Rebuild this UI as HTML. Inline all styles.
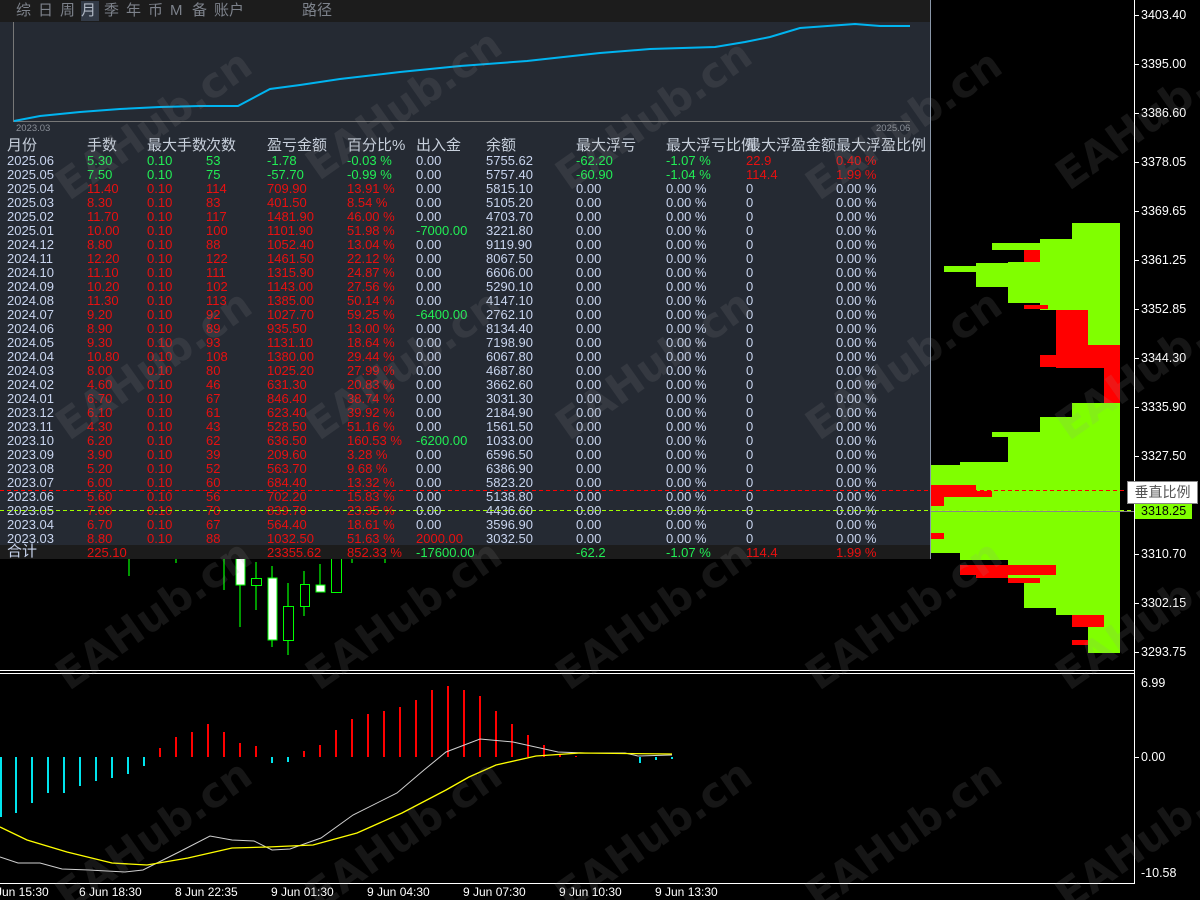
<!DOCTYPE html>
<html style="width:1200px;height:900px;overflow:hidden"><head><meta charset="utf-8">
<style>
*{margin:0;padding:0;box-sizing:border-box}
body{width:1200px;height:900px;background:#000;position:relative;overflow:hidden;font-family:"Liberation Sans","Noto Sans CJK SC",sans-serif}
.abs{position:absolute}
#panel{position:absolute;left:0;top:0;width:931px;height:559px;background:#252a33;border-right:1px solid #8a97a8}
#tb{position:absolute;left:0;top:0;width:930px;height:22px;background:#1c1c1c;color:#7d828b;font-size:15px;line-height:22px}
#tb span{position:absolute;top:0}
.r{position:absolute;left:0;width:930px;height:14px;line-height:14px;font-size:13px;color:#c8d4ee;white-space:nowrap}
.r span{position:absolute;top:0}
.h{font-size:15px;height:18px;line-height:18px;color:#c8d0dc}
.c1{left:7px}.c2{left:87px}.c3{left:147px}.c4{left:206px}.c5{left:267px}.c6{left:347px}.c7{left:416px}.c8{left:486px}.c9{left:576px}.c10{left:666px}.c11{left:746px}.c12{left:836px}
.g{color:#22ee55}.d{color:#e81010}
.rd .c2,.rd .c3,.rd .c4,.rd .c5,.rd .c6{color:#e81010}
.gr .c2,.gr .c3,.gr .c4,.gr .c5,.gr .c6,.gr .c9,.gr .c10{color:#22ee55}
.gr .c11,.gr .c12{color:#e81010}
.pl{position:absolute;left:1141px;color:#fff;font-size:12.5px;line-height:14px}
.tk{position:absolute;left:1134px;width:5px;height:1px;background:#fff}
#wmw{position:absolute;left:0;top:0;width:1200px;height:900px;overflow:hidden}
.wm{position:absolute;font-size:42px;font-weight:bold;color:rgba(150,150,150,0.15);transform:rotate(-35deg);white-space:nowrap;font-family:"DejaVu Sans",sans-serif}
.tl{position:absolute;top:885px;color:#fff;font-size:12px}
</style></head><body>

<svg class="abs" style="left:0;top:0" width="1200" height="900">
<g stroke="#00ff00" stroke-width="1.2" fill="none">
<line x1="129" y1="558" x2="129" y2="576"/><line x1="176" y1="558" x2="176" y2="563"/><line x1="224" y1="558" x2="224" y2="590"/>
<line x1="240" y1="558" x2="240" y2="627"/><line x1="256" y1="562" x2="256" y2="610"/><line x1="272" y1="566" x2="272" y2="647"/>
<line x1="288" y1="583" x2="288" y2="655"/><line x1="304" y1="571" x2="304" y2="616"/><line x1="320" y1="564" x2="320" y2="592"/>
<line x1="352" y1="558" x2="352" y2="563"/><line x1="385" y1="558" x2="385" y2="563"/>
</g>
<g stroke="#00ff00" stroke-width="1">
<rect x="236" y="558" width="9" height="27" fill="#fff"/>
<rect x="251.5" y="578.5" width="10" height="7" fill="#000"/>
<rect x="268" y="578" width="9" height="62" fill="#fff"/>
<rect x="283.5" y="606.5" width="10" height="34" fill="#000"/>
<rect x="300.5" y="584.5" width="9" height="22" fill="#000"/>
<rect x="316" y="585" width="9" height="7" fill="#fff"/>
<rect x="331.5" y="556" width="10" height="36.5" fill="#000"/>
</g>
<g fill="#80ff00">
<rect x="1072" y="223" width="48" height="16"/>
<rect x="1040" y="239" width="80" height="71"/>
<rect x="992" y="243" width="48" height="7"/>
<rect x="1008" y="262" width="32" height="41"/>
<rect x="976" y="263" width="32" height="24"/>
<rect x="944" y="266" width="32" height="6"/>
<rect x="1088" y="310" width="32" height="35"/>
<rect x="1072" y="403" width="48" height="14"/>
<rect x="1040" y="417" width="80" height="15"/>
<rect x="992" y="432" width="128" height="5"/>
<rect x="1008" y="437" width="112" height="25"/>
<rect x="960" y="462" width="160" height="4"/>
<rect x="930" y="465" width="190" height="88"/>
<rect x="960" y="553" width="160" height="7"/>
<rect x="1008" y="560" width="112" height="23"/>
<rect x="1024" y="583" width="96" height="25"/>
<rect x="1056" y="608" width="64" height="7"/>
<rect x="1088" y="615" width="32" height="38"/>
</g>
<g fill="#ff0000">
<rect x="1024" y="250" width="16" height="12"/>
<rect x="1024" y="305" width="24" height="4"/>
<rect x="1056" y="310" width="32" height="58"/>
<rect x="1088" y="345" width="32" height="23"/>
<rect x="1104" y="368" width="16" height="35"/>
<rect x="1040" y="355" width="16" height="12"/>
<rect x="930" y="485" width="46" height="12"/>
<rect x="976" y="491" width="16" height="6"/>
<rect x="930" y="497" width="14" height="9"/>
<rect x="930" y="533" width="14" height="6"/>
<rect x="960" y="565" width="96" height="10"/>
<rect x="976" y="575" width="32" height="3"/>
<rect x="1008" y="578" width="32" height="5"/>
<rect x="1072" y="615" width="32" height="12"/>
<rect x="1072" y="640" width="16" height="5"/>
</g>
<line x1="930" y1="511.5" x2="1134" y2="511.5" stroke="#888" stroke-width="1"/>
<line x1="0" y1="490.5" x2="1134" y2="490.5" stroke="#ff0000" stroke-dasharray="4,3"/>
<line x1="0" y1="510.5" x2="1134" y2="510.5" stroke="#a0ff00" stroke-dasharray="4,3"/>
<line x1="0" y1="670.5" x2="1134" y2="670.5" stroke="#fff"/>
<line x1="0" y1="673.5" x2="1134" y2="673.5" stroke="#fff"/>
<line x1="0" y1="883.5" x2="1134" y2="883.5" stroke="#fff"/>
<line x1="1134.5" y1="0" x2="1134.5" y2="884" stroke="#fff"/>
<g stroke="#00e5ee" stroke-width="2">
<line x1="1" y1="757" x2="1" y2="817"/><line x1="16" y1="757" x2="16" y2="813"/><line x1="32" y1="757" x2="32" y2="803"/>
<line x1="48" y1="757" x2="48" y2="793"/><line x1="64" y1="757" x2="64" y2="793"/><line x1="80" y1="757" x2="80" y2="786"/>
<line x1="96" y1="757" x2="96" y2="781"/><line x1="112" y1="757" x2="112" y2="778"/><line x1="128" y1="757" x2="128" y2="774"/>
<line x1="144" y1="757" x2="144" y2="766"/><line x1="272" y1="757" x2="272" y2="763"/><line x1="288" y1="757" x2="288" y2="762"/>
<line x1="640" y1="757" x2="640" y2="763"/><line x1="656" y1="757" x2="656" y2="760"/><line x1="672" y1="757" x2="672" y2="759"/>
</g>
<g stroke="#ff0000" stroke-width="2">
<line x1="160" y1="757" x2="160" y2="748"/><line x1="176" y1="757" x2="176" y2="737"/><line x1="192" y1="757" x2="192" y2="732"/>
<line x1="208" y1="757" x2="208" y2="724"/><line x1="224" y1="757" x2="224" y2="732"/><line x1="240" y1="757" x2="240" y2="743"/>
<line x1="256" y1="757" x2="256" y2="746"/><line x1="304" y1="757" x2="304" y2="751"/><line x1="320" y1="757" x2="320" y2="745"/>
<line x1="336" y1="757" x2="336" y2="730"/><line x1="352" y1="757" x2="352" y2="719"/><line x1="368" y1="757" x2="368" y2="714"/>
<line x1="384" y1="757" x2="384" y2="711"/><line x1="400" y1="757" x2="400" y2="707"/><line x1="416" y1="757" x2="416" y2="700"/>
<line x1="432" y1="757" x2="432" y2="690"/><line x1="448" y1="757" x2="448" y2="686"/><line x1="464" y1="757" x2="464" y2="690"/>
<line x1="480" y1="757" x2="480" y2="696"/><line x1="496" y1="757" x2="496" y2="711"/><line x1="512" y1="757" x2="512" y2="724"/>
<line x1="528" y1="757" x2="528" y2="735"/><line x1="544" y1="757" x2="544" y2="745"/><line x1="560" y1="757" x2="560" y2="755"/>
<line x1="576" y1="757" x2="576" y2="756"/>
</g>
<polyline fill="none" stroke="#d0d0d0" stroke-width="1" points="0,857 18,863 40,863 62,869 89,870 125,872 143,870 179,852 210,836 232,840 254,841 272,850 290,849 321,838 353,815 397,793 424,770 446,752 480,739 513,742 558,752 585,753 625,753 638,756 672,755"/>
<polyline fill="none" stroke="#ffff00" stroke-width="1.3" points="0,827 27,840 67,852 112,863 147,865 188,858 232,848 268,847 313,845 357,833 402,813 446,790 469,777 496,765 536,756 580,753 672,754"/>
</svg>

<div id="panel">
<div id="tb">
<span style="left:16px">综</span><span style="left:38px">日</span><span style="left:60px">周</span>
<span style="left:81px;width:18px;height:20px;background:#323a46;top:1px;line-height:20px;color:#b0b8c4">月</span>
<span style="left:104px">季</span><span style="left:126px">年</span><span style="left:148px">币</span><span style="left:170px">M</span><span style="left:192px">备</span><span style="left:214px">账户</span>
<span style="left:302px">路径</span>
</div>
<svg class="abs" style="left:0;top:22px" width="930" height="110">
<line x1="13.5" y1="0" x2="13.5" y2="100" stroke="#777"/>
<line x1="13" y1="99.5" x2="910" y2="99.5" stroke="#777"/>
<polyline fill="none" stroke="#00b4f0" stroke-width="2" points="14,99 40,94 80,90 120,87 160,85 200,84 238,84 270,67 300,63 340,57 400,50 460,44 527,39 600,31 650,27 715,25 745,20 770,15 800,6 855,2 880,4 910,4"/>
<text x="16" y="109" fill="#8a8f98" font-size="9.5" font-family="Liberation Sans">2023.03</text>
<text x="876" y="109" fill="#8a8f98" font-size="9.5" font-family="Liberation Sans">2025.06</text>
</svg>

<div class="r h" style="top:137px"><span class="c1">月份</span><span class="c2">手数</span><span class="c3">最大手数</span><span class="c4">次数</span><span class="c5">盈亏金额</span><span class="c6">百分比%</span><span class="c7">出入金</span><span class="c8">余额</span><span class="c9">最大浮亏</span><span class="c10">最大浮亏比例</span><span class="c11">最大浮盈金额</span><span class="c12">最大浮盈比例</span></div>

<div class="r gr" style="top:154px"><span class="c1">2025.06</span><span class="c2">5.30</span><span class="c3">0.10</span><span class="c4">53</span><span class="c5">-1.78</span><span class="c6">-0.03 %</span><span class="c7">0.00</span><span class="c8">5755.62</span><span class="c9">-62.20</span><span class="c10">-1.07 %</span><span class="c11">22.9</span><span class="c12">0.40 %</span></div>
<div class="r gr" style="top:168px"><span class="c1">2025.05</span><span class="c2">7.50</span><span class="c3">0.10</span><span class="c4">75</span><span class="c5">-57.70</span><span class="c6">-0.99 %</span><span class="c7">0.00</span><span class="c8">5757.40</span><span class="c9">-60.90</span><span class="c10">-1.04 %</span><span class="c11">114.4</span><span class="c12">1.99 %</span></div>
<div class="r rd" style="top:182px"><span class="c1">2025.04</span><span class="c2">11.40</span><span class="c3">0.10</span><span class="c4">114</span><span class="c5">709.90</span><span class="c6">13.91 %</span><span class="c7">0.00</span><span class="c8">5815.10</span><span class="c9">0.00</span><span class="c10">0.00 %</span><span class="c11">0</span><span class="c12">0.00 %</span></div>
<div class="r rd" style="top:196px"><span class="c1">2025.03</span><span class="c2">8.30</span><span class="c3">0.10</span><span class="c4">83</span><span class="c5">401.50</span><span class="c6">8.54 %</span><span class="c7">0.00</span><span class="c8">5105.20</span><span class="c9">0.00</span><span class="c10">0.00 %</span><span class="c11">0</span><span class="c12">0.00 %</span></div>
<div class="r rd" style="top:210px"><span class="c1">2025.02</span><span class="c2">11.70</span><span class="c3">0.10</span><span class="c4">117</span><span class="c5">1481.90</span><span class="c6">46.00 %</span><span class="c7">0.00</span><span class="c8">4703.70</span><span class="c9">0.00</span><span class="c10">0.00 %</span><span class="c11">0</span><span class="c12">0.00 %</span></div>
<div class="r rd" style="top:224px"><span class="c1">2025.01</span><span class="c2">10.00</span><span class="c3">0.10</span><span class="c4">100</span><span class="c5">1101.90</span><span class="c6">51.98 %</span><span class="c7 g">-7000.00</span><span class="c8">3221.80</span><span class="c9">0.00</span><span class="c10">0.00 %</span><span class="c11">0</span><span class="c12">0.00 %</span></div>
<div class="r rd" style="top:238px"><span class="c1">2024.12</span><span class="c2">8.80</span><span class="c3">0.10</span><span class="c4">88</span><span class="c5">1052.40</span><span class="c6">13.04 %</span><span class="c7">0.00</span><span class="c8">9119.90</span><span class="c9">0.00</span><span class="c10">0.00 %</span><span class="c11">0</span><span class="c12">0.00 %</span></div>
<div class="r rd" style="top:252px"><span class="c1">2024.11</span><span class="c2">12.20</span><span class="c3">0.10</span><span class="c4">122</span><span class="c5">1461.50</span><span class="c6">22.12 %</span><span class="c7">0.00</span><span class="c8">8067.50</span><span class="c9">0.00</span><span class="c10">0.00 %</span><span class="c11">0</span><span class="c12">0.00 %</span></div>
<div class="r rd" style="top:266px"><span class="c1">2024.10</span><span class="c2">11.10</span><span class="c3">0.10</span><span class="c4">111</span><span class="c5">1315.90</span><span class="c6">24.87 %</span><span class="c7">0.00</span><span class="c8">6606.00</span><span class="c9">0.00</span><span class="c10">0.00 %</span><span class="c11">0</span><span class="c12">0.00 %</span></div>
<div class="r rd" style="top:280px"><span class="c1">2024.09</span><span class="c2">10.20</span><span class="c3">0.10</span><span class="c4">102</span><span class="c5">1143.00</span><span class="c6">27.56 %</span><span class="c7">0.00</span><span class="c8">5290.10</span><span class="c9">0.00</span><span class="c10">0.00 %</span><span class="c11">0</span><span class="c12">0.00 %</span></div>
<div class="r rd" style="top:294px"><span class="c1">2024.08</span><span class="c2">11.30</span><span class="c3">0.10</span><span class="c4">113</span><span class="c5">1385.00</span><span class="c6">50.14 %</span><span class="c7">0.00</span><span class="c8">4147.10</span><span class="c9">0.00</span><span class="c10">0.00 %</span><span class="c11">0</span><span class="c12">0.00 %</span></div>
<div class="r rd" style="top:308px"><span class="c1">2024.07</span><span class="c2">9.20</span><span class="c3">0.10</span><span class="c4">92</span><span class="c5">1027.70</span><span class="c6">59.25 %</span><span class="c7 g">-6400.00</span><span class="c8">2762.10</span><span class="c9">0.00</span><span class="c10">0.00 %</span><span class="c11">0</span><span class="c12">0.00 %</span></div>
<div class="r rd" style="top:322px"><span class="c1">2024.06</span><span class="c2">8.90</span><span class="c3">0.10</span><span class="c4">89</span><span class="c5">935.50</span><span class="c6">13.00 %</span><span class="c7">0.00</span><span class="c8">8134.40</span><span class="c9">0.00</span><span class="c10">0.00 %</span><span class="c11">0</span><span class="c12">0.00 %</span></div>
<div class="r rd" style="top:336px"><span class="c1">2024.05</span><span class="c2">9.30</span><span class="c3">0.10</span><span class="c4">93</span><span class="c5">1131.10</span><span class="c6">18.64 %</span><span class="c7">0.00</span><span class="c8">7198.90</span><span class="c9">0.00</span><span class="c10">0.00 %</span><span class="c11">0</span><span class="c12">0.00 %</span></div>
<div class="r rd" style="top:350px"><span class="c1">2024.04</span><span class="c2">10.80</span><span class="c3">0.10</span><span class="c4">108</span><span class="c5">1380.00</span><span class="c6">29.44 %</span><span class="c7">0.00</span><span class="c8">6067.80</span><span class="c9">0.00</span><span class="c10">0.00 %</span><span class="c11">0</span><span class="c12">0.00 %</span></div>
<div class="r rd" style="top:364px"><span class="c1">2024.03</span><span class="c2">8.00</span><span class="c3">0.10</span><span class="c4">80</span><span class="c5">1025.20</span><span class="c6">27.99 %</span><span class="c7">0.00</span><span class="c8">4687.80</span><span class="c9">0.00</span><span class="c10">0.00 %</span><span class="c11">0</span><span class="c12">0.00 %</span></div>
<div class="r rd" style="top:378px"><span class="c1">2024.02</span><span class="c2">4.60</span><span class="c3">0.10</span><span class="c4">46</span><span class="c5">631.30</span><span class="c6">20.83 %</span><span class="c7">0.00</span><span class="c8">3662.60</span><span class="c9">0.00</span><span class="c10">0.00 %</span><span class="c11">0</span><span class="c12">0.00 %</span></div>
<div class="r rd" style="top:392px"><span class="c1">2024.01</span><span class="c2">6.70</span><span class="c3">0.10</span><span class="c4">67</span><span class="c5">846.40</span><span class="c6">38.74 %</span><span class="c7">0.00</span><span class="c8">3031.30</span><span class="c9">0.00</span><span class="c10">0.00 %</span><span class="c11">0</span><span class="c12">0.00 %</span></div>
<div class="r rd" style="top:406px"><span class="c1">2023.12</span><span class="c2">6.10</span><span class="c3">0.10</span><span class="c4">61</span><span class="c5">623.40</span><span class="c6">39.92 %</span><span class="c7">0.00</span><span class="c8">2184.90</span><span class="c9">0.00</span><span class="c10">0.00 %</span><span class="c11">0</span><span class="c12">0.00 %</span></div>
<div class="r rd" style="top:420px"><span class="c1">2023.11</span><span class="c2">4.30</span><span class="c3">0.10</span><span class="c4">43</span><span class="c5">528.50</span><span class="c6">51.16 %</span><span class="c7">0.00</span><span class="c8">1561.50</span><span class="c9">0.00</span><span class="c10">0.00 %</span><span class="c11">0</span><span class="c12">0.00 %</span></div>
<div class="r rd" style="top:434px"><span class="c1">2023.10</span><span class="c2">6.20</span><span class="c3">0.10</span><span class="c4">62</span><span class="c5">636.50</span><span class="c6">160.53 %</span><span class="c7 g">-6200.00</span><span class="c8">1033.00</span><span class="c9">0.00</span><span class="c10">0.00 %</span><span class="c11">0</span><span class="c12">0.00 %</span></div>
<div class="r rd" style="top:448px"><span class="c1">2023.09</span><span class="c2">3.90</span><span class="c3">0.10</span><span class="c4">39</span><span class="c5">209.60</span><span class="c6">3.28 %</span><span class="c7">0.00</span><span class="c8">6596.50</span><span class="c9">0.00</span><span class="c10">0.00 %</span><span class="c11">0</span><span class="c12">0.00 %</span></div>
<div class="r rd" style="top:462px"><span class="c1">2023.08</span><span class="c2">5.20</span><span class="c3">0.10</span><span class="c4">52</span><span class="c5">563.70</span><span class="c6">9.68 %</span><span class="c7">0.00</span><span class="c8">6386.90</span><span class="c9">0.00</span><span class="c10">0.00 %</span><span class="c11">0</span><span class="c12">0.00 %</span></div>
<div class="r rd" style="top:476px"><span class="c1">2023.07</span><span class="c2">6.00</span><span class="c3">0.10</span><span class="c4">60</span><span class="c5">684.40</span><span class="c6">13.32 %</span><span class="c7">0.00</span><span class="c8">5823.20</span><span class="c9">0.00</span><span class="c10">0.00 %</span><span class="c11">0</span><span class="c12">0.00 %</span></div>
<div class="r rd" style="top:490px"><span class="c1">2023.06</span><span class="c2">5.60</span><span class="c3">0.10</span><span class="c4">56</span><span class="c5">702.20</span><span class="c6">15.83 %</span><span class="c7">0.00</span><span class="c8">5138.80</span><span class="c9">0.00</span><span class="c10">0.00 %</span><span class="c11">0</span><span class="c12">0.00 %</span></div>
<div class="r rd" style="top:504px"><span class="c1">2023.05</span><span class="c2">7.00</span><span class="c3">0.10</span><span class="c4">70</span><span class="c5">839.70</span><span class="c6">23.35 %</span><span class="c7">0.00</span><span class="c8">4436.60</span><span class="c9">0.00</span><span class="c10">0.00 %</span><span class="c11">0</span><span class="c12">0.00 %</span></div>
<div class="r rd" style="top:518px"><span class="c1">2023.04</span><span class="c2">6.70</span><span class="c3">0.10</span><span class="c4">67</span><span class="c5">564.40</span><span class="c6">18.61 %</span><span class="c7">0.00</span><span class="c8">3596.90</span><span class="c9">0.00</span><span class="c10">0.00 %</span><span class="c11">0</span><span class="c12">0.00 %</span></div>
<div class="r rd" style="top:532px"><span class="c1">2023.03</span><span class="c2">8.80</span><span class="c3">0.10</span><span class="c4">88</span><span class="c5">1032.50</span><span class="c6">51.63 %</span><span class="c7 d">2000.00</span><span class="c8">3032.50</span><span class="c9">0.00</span><span class="c10">0.00 %</span><span class="c11">0</span><span class="c12">0.00 %</span></div>
<div class="abs" style="left:0;top:545px;width:930px;height:14px;background:#1c1c1c"></div>
<div class="r" style="top:546px;font-size:13px"><span class="c1" style="font-size:15px;top:-1px">合计</span><span class="c2 d">225.10</span><span class="c5 d">23355.62</span><span class="c6 d">852.33 %</span><span class="c7 g">-17600.00</span><span class="c9 g">-62.2</span><span class="c10 g">-1.07 %</span><span class="c11 d">114.4</span><span class="c12 d">1.99 %</span></div>
</div>

<svg class="abs" style="left:0;top:0" width="931" height="560">
<line x1="0" y1="490.5" x2="931" y2="490.5" stroke="#ff0000" stroke-dasharray="4,3"/>
<line x1="0" y1="510.5" x2="931" y2="510.5" stroke="#a0ff00" stroke-dasharray="4,3"/>
</svg>

<div class="tk" style="top:15px"></div><div class="pl" style="top:8px">3403.40</div>
<div class="tk" style="top:64px"></div><div class="pl" style="top:57px">3395.00</div>
<div class="tk" style="top:113px"></div><div class="pl" style="top:106px">3386.60</div>
<div class="tk" style="top:162px"></div><div class="pl" style="top:155px">3378.05</div>
<div class="tk" style="top:211px"></div><div class="pl" style="top:204px">3369.65</div>
<div class="tk" style="top:260px"></div><div class="pl" style="top:253px">3361.25</div>
<div class="tk" style="top:309px"></div><div class="pl" style="top:302px">3352.85</div>
<div class="tk" style="top:358px"></div><div class="pl" style="top:351px">3344.30</div>
<div class="tk" style="top:407px"></div><div class="pl" style="top:400px">3335.90</div>
<div class="tk" style="top:456px"></div><div class="pl" style="top:449px">3327.50</div>
<div class="abs" style="left:1135px;top:503px;width:57px;height:16px;background:#80ff00"></div>
<div class="pl" style="top:504px;color:#000">3318.25</div>
<div class="tk" style="top:554px"></div><div class="pl" style="top:547px">3310.70</div>
<div class="tk" style="top:603px"></div><div class="pl" style="top:596px">3302.15</div>
<div class="tk" style="top:652px"></div><div class="pl" style="top:645px">3293.75</div>
<div class="pl" style="top:676px">6.99</div>
<div class="tk" style="top:757px"></div><div class="pl" style="top:750px">0.00</div>
<div class="pl" style="top:866px">-10.58</div>
<div class="abs" style="left:1127px;top:481px;width:71px;height:23px;background:#fff;border:1px solid #888;color:#555;font-size:14px;line-height:21px;text-align:center">垂直比例</div>

<div class="tl" style="left:-4px">Jun 15:30</div>
<div class="tl" style="left:79px">6 Jun 18:30</div>
<div class="tl" style="left:175px">8 Jun 22:35</div>
<div class="tl" style="left:271px">9 Jun 01:30</div>
<div class="tl" style="left:367px">9 Jun 04:30</div>
<div class="tl" style="left:463px">9 Jun 07:30</div>
<div class="tl" style="left:559px">9 Jun 10:30</div>
<div class="tl" style="left:655px">9 Jun 13:30</div>

<div id="wmw">
<div class="wm" style="left:40px;top:100px">EAHub.cn</div>
<div class="wm" style="left:290px;top:80px">EAHub.cn</div>
<div class="wm" style="left:540px;top:90px">EAHub.cn</div>
<div class="wm" style="left:790px;top:100px">EAHub.cn</div>
<div class="wm" style="left:1040px;top:90px">EAHub.cn</div>
<div class="wm" style="left:40px;top:340px">EAHub.cn</div>
<div class="wm" style="left:290px;top:340px">EAHub.cn</div>
<div class="wm" style="left:540px;top:340px">EAHub.cn</div>
<div class="wm" style="left:790px;top:340px">EAHub.cn</div>
<div class="wm" style="left:1040px;top:340px">EAHub.cn</div>
<div class="wm" style="left:40px;top:590px">EAHub.cn</div>
<div class="wm" style="left:290px;top:590px">EAHub.cn</div>
<div class="wm" style="left:540px;top:590px">EAHub.cn</div>
<div class="wm" style="left:790px;top:590px">EAHub.cn</div>
<div class="wm" style="left:1040px;top:590px">EAHub.cn</div>
<div class="wm" style="left:40px;top:810px">EAHub.cn</div>
<div class="wm" style="left:290px;top:810px">EAHub.cn</div>
<div class="wm" style="left:540px;top:810px">EAHub.cn</div>
<div class="wm" style="left:790px;top:810px">EAHub.cn</div>
<div class="wm" style="left:1040px;top:810px">EAHub.cn</div>
</div>
</body></html>
